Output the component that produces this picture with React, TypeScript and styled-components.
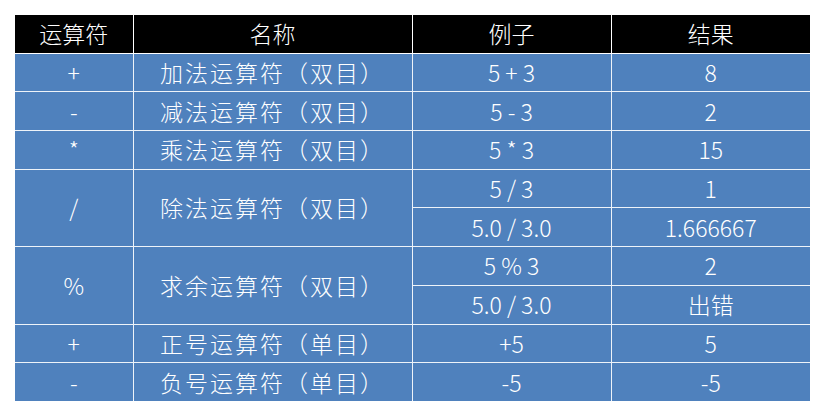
import React from "react";
import styled, { createGlobalStyle } from "styled-components";

const GlobalStyle = createGlobalStyle`
  html, body {
    margin: 0;
    padding: 0;
    background: #ffffff;
  }
`;

const Page = styled.div`
  padding: 15px 0 0 15px;
  width: 824px;
  height: 417px;
  box-sizing: border-box;
`;

const Table = styled.table`
  border-collapse: collapse;
  table-layout: fixed;
  width: 795px;
  font-family: "Noto Sans CJK SC", "Noto Sans", sans-serif;
  font-weight: 300;
  font-size: 23px;
  color: #ffffff;
`;

const HeadCell = styled.th`
  background: #000000;
  font-weight: 300;
  height: 37.7px;
  padding: 0;
  text-align: center;
  border: 1px solid #ffffff;
  border-top: none;
  line-height: 1;

  &:first-child {
    border-left: none;
  }
  &:last-child {
    border-right: none;
  }
`;

const Cell = styled.td<{ $wide?: boolean }>`
  background: #4f81bd;
  height: 37.7px;
  padding: 0;
  text-align: center;
  border: 1px solid #eef3f9;
  line-height: 1;
  letter-spacing: ${(p) => (p.$wide ? "2px" : "0")};

  &:first-child {
    border-left: none;
  }
  &:last-child {
    border-right: none;
  }
`;

const BottomRow = styled.tr`
  td {
    border-bottom: none;
  }
`;

interface Line {
  op?: string;
  name?: string;
  span?: number;
  example: string;
  result: string;
}

const lines: Line[] = [
  { op: "+", name: "加法运算符（双目）", example: "5 + 3", result: "8" },
  { op: "-", name: "减法运算符（双目）", example: "5 - 3", result: "2" },
  { op: "*", name: "乘法运算符（双目）", example: "5 * 3", result: "15" },
  { op: "/", name: "除法运算符（双目）", span: 2, example: "5 / 3", result: "1" },
  { example: "5.0 / 3.0", result: "1.666667" },
  { op: "%", name: "求余运算符（双目）", span: 2, example: "5 % 3", result: "2" },
  { example: "5.0 / 3.0", result: "出错" },
  { op: "+", name: "正号运算符（单目）", example: "+5", result: "5" },
  { op: "-", name: "负号运算符（单目）", example: "-5", result: "-5" },
];

export default function App() {
  return (
    <>
      <GlobalStyle />
      <Page>
        <Table>
          <colgroup>
            <col style={{ width: 118 }} />
            <col style={{ width: 279 }} />
            <col style={{ width: 199 }} />
            <col style={{ width: 199 }} />
          </colgroup>
          <thead>
            <tr>
              <HeadCell>运算符</HeadCell>
              <HeadCell>名称</HeadCell>
              <HeadCell>例子</HeadCell>
              <HeadCell>结果</HeadCell>
            </tr>
          </thead>
          <tbody>
            {lines.map((l, i) => {
              const Row = i === lines.length - 1 ? BottomRow : "tr";
              return (
                <Row key={i}>
                  {l.op !== undefined && <Cell rowSpan={l.span}>{l.op}</Cell>}
                  {l.name !== undefined && (
                    <Cell $wide rowSpan={l.span}>
                      {l.name}
                    </Cell>
                  )}
                  <Cell>{l.example}</Cell>
                  <Cell>{l.result}</Cell>
                </Row>
              );
            })}
          </tbody>
        </Table>
      </Page>
    </>
  );
}
